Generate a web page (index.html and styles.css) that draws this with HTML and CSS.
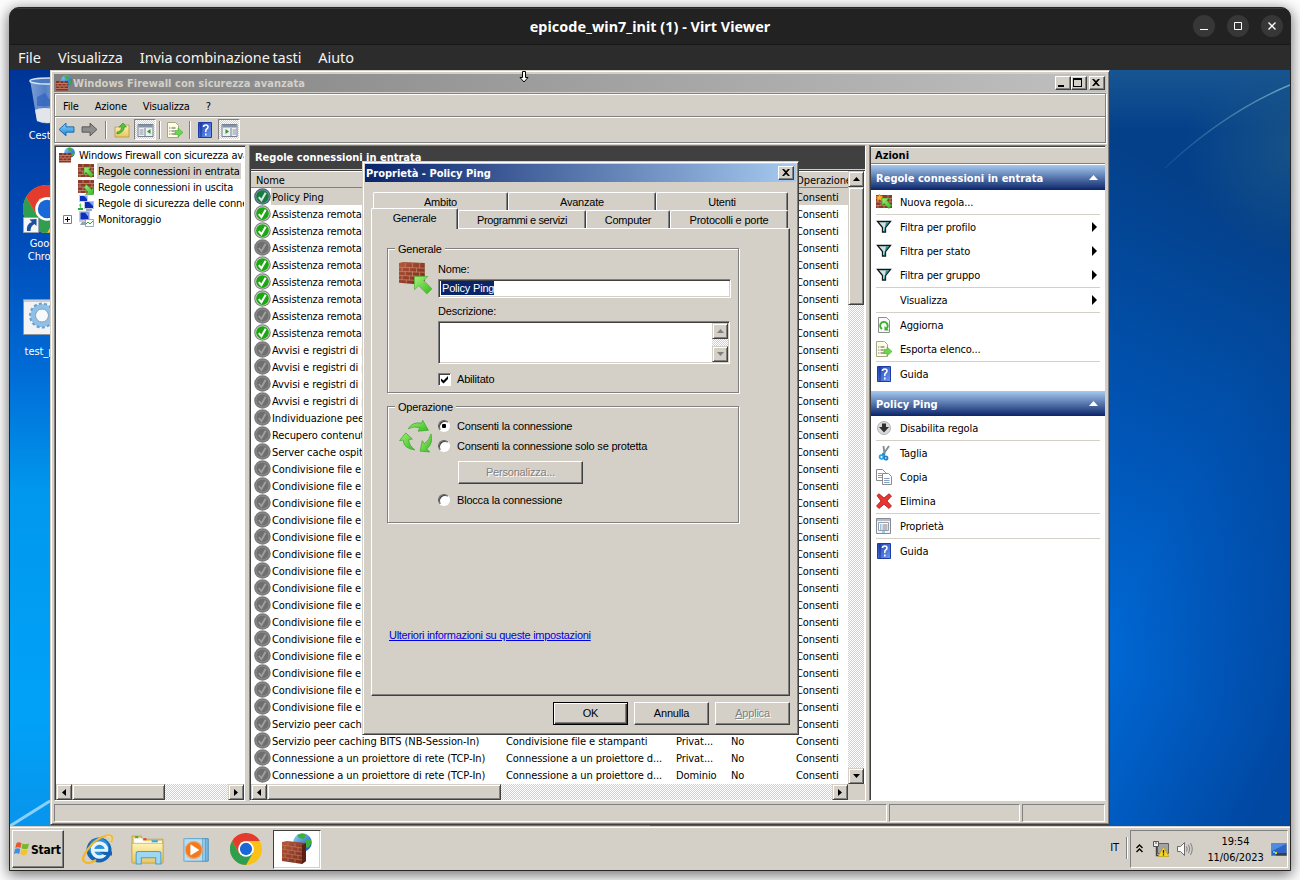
FILE: index.html
```html
<!DOCTYPE html>
<html lang="it">
<head>
<meta charset="utf-8">
<title>epicode_win7_init (1) - Virt Viewer</title>
<link rel="stylesheet" href="styles.css">
</head>
<body>
<svg class="defs" width="0" height="0">
  <defs>
    <linearGradient id="gGlobe" x1="0" y1="0" x2="1" y2="1"><stop offset="0" stop-color="#8fd4ff"/><stop offset="1" stop-color="#0a4fb0"/></linearGradient>
    <linearGradient id="gGreen" x1="0" y1="0" x2="1" y2="1"><stop offset="0" stop-color="#a4f07c"/><stop offset="1" stop-color="#36b81e"/></linearGradient>
    <linearGradient id="gBlue" x1="0" y1="0" x2="0" y2="1"><stop offset="0" stop-color="#8fd6fb"/><stop offset="1" stop-color="#1a86d8"/></linearGradient>
    <linearGradient id="gBook" x1="0" y1="0" x2="1" y2="1"><stop offset="0" stop-color="#1c3fb4"/><stop offset="1" stop-color="#6f9cf2"/></linearGradient>
    <linearGradient id="gBrick" x1="0" y1="0" x2="1" y2="1"><stop offset="0" stop-color="#b8583c"/><stop offset="1" stop-color="#6e2817"/></linearGradient>
    <linearGradient id="gFold" x1="0" y1="0" x2="0" y2="1"><stop offset="0" stop-color="#fff3b4"/><stop offset="1" stop-color="#e6c763"/></linearGradient>
    <linearGradient id="gBin" x1="0" y1="0" x2="1" y2="0"><stop offset="0" stop-color="#8ba9d8"/><stop offset=".4" stop-color="#5b87cc"/><stop offset="1" stop-color="#c9d8ee"/></linearGradient>
    <symbol id="wall" viewBox="0 0 16 16">
      <path d="M0 1h16v13H0z" fill="#8e3a28"/>
      <path d="M0 4.500h16M0 8h16M0 11.500h16M5 1v3.500M12 1v3.500M2 4.500V8M8 4.500V8M14 4.500V8M5 8v3.500M11 8v3.500M2 11.500V14M8 11.500V14" stroke="#c99a88" stroke-width=".7" fill="none"/>
    </symbol>
    <symbol id="globewall" viewBox="0 0 16 16">
      <circle cx="10.500" cy="5.500" r="5.300" fill="url(#gGlobe)"/>
      <path d="M8 1.500q4-2 5.500 1l-1.500 2-2-1zM13 6l2.500-1q0 4-3 5z" fill="#3fae3a"/>
      <path d="M0 6h12v9.500H0z" fill="#8a3222"/>
      <path d="M0 8.500h12M0 11h12M0 13.500h12M4 6v2.500M8 6v2.500M6 8.500V11M10 8.500V11M2 8.500V11M4 11v2.500M8 11v2.500" stroke="#cf917c" stroke-width=".7" fill="none"/>
    </symbol>
    <symbol id="rulein" viewBox="0 0 16 16"><use href="#wall"/><path d="M6 4h7l-2 2.500 4.500 5-2.500 3-5-5L6 12z" fill="url(#gGreen)" stroke="#2d9420" stroke-width=".6"/></symbol>
    <symbol id="ruleout" viewBox="0 0 16 16"><use href="#wall"/><path d="M15.500 15.500h-8l2.500-2.500-4-4.500 2.500-3 5 5 2-2.500z" fill="url(#gGreen)" stroke="#2d9420" stroke-width=".6"/></symbol>
    <symbol id="rulenew" viewBox="0 0 16 16"><use href="#rulein"/><path d="M3.500 0l1 2.300 2.500.3-1.800 1.700.8 2.500-2.500-1.200L1 6.800l.8-2.500L0 2.600l2.500-.3z" fill="#ffb52c" stroke="#ee8a1e" stroke-width=".5"/></symbol>
    <symbol id="pcs" viewBox="0 0 16 16">
      <path d="M1 0h9v7H1z" fill="#c8d2e2"/><path d="M2 1h7v5H2z" fill="#0d2ec0"/><path d="M6 1h3v3z" fill="#7ea2f2"/>
      <path d="M6 6h10v8H6z" fill="#bcc8da"/><path d="M7 7h8v6H7z" fill="#0c2ab4"/><path d="M11 7h4v4z" fill="#7ea2f2"/>
      <path d="M1 10l2-2v6z" fill="#57d64a"/><path d="M0 13h5v2H0z" fill="#2ca83c"/><path d="M8 14h6v2H8z" fill="#9aa6ba"/>
    </symbol>
    <symbol id="mon" viewBox="0 0 16 16">
      <path d="M1 0h11v11H1z" fill="#c3cddb"/><path d="M2.500 1.500h8v7h-8z" fill="#0c31bd"/><path d="M7 1.500h3.500V6z" fill="#86aaf4"/><path d="M4 11h5l2 3H2z" fill="#93a0b5"/>
      <path d="M7.500 8.500h8v7h-8z" fill="#fff" stroke="#7f96ac" stroke-width=".8"/><path d="M8 13l2-2 2 2 3-3" stroke="#33a22a" fill="none"/>
    </symbol>
    <symbol id="back" viewBox="0 0 16 14"><path d="M1 7l6.500-6v3.500H15v5H7.500V13z" fill="url(#gBlue)" stroke="#1668ae" stroke-width=".9"/></symbol>
    <symbol id="fwd" viewBox="0 0 16 14"><path d="M15 7L8.500 1v3.500H1v5h7.500V13z" fill="#8d8d8d" stroke="#555" stroke-width=".9"/></symbol>
    <symbol id="up" viewBox="0 0 16 16"><path d="M1 5h5l1-2h8v12H1z" fill="url(#gFold)" stroke="#b18d32" stroke-width=".7"/><path d="M3 10q4 0 4.500-5H5l4-4 3.500 4h-2q-1 6-7.500 7z" fill="#55c23a" stroke="#2f8c1e" stroke-width=".6"/></symbol>
    <symbol id="panel" viewBox="0 0 16 16"><path d="M.5 2.500h15v12H.5z" fill="#eef0f3" stroke="#77808c"/><path d="M1 3h14v2.500H1z" fill="#8494a8"/><path d="M2 8h4M2 10h4M2 12h4" stroke="#8795ac"/><path d="M7.500 6v8" stroke="#77808c"/><path d="M13 7v5l-3.500-2.500z" fill="#2b9a24"/></symbol>
    <symbol id="panel2" viewBox="0 0 16 16"><path d="M.5 2.500h15v12H.5z" fill="#eef0f3" stroke="#77808c"/><path d="M1 3h14v2.500H1z" fill="#8494a8"/><path d="M11 8h3.500M11 10h3.500M11 12h3.500" stroke="#8795ac"/><path d="M9.500 6v8" stroke="#77808c"/><path d="M4 7v5l3.500-2.500z" fill="#2b9a24"/></symbol>
    <symbol id="export" viewBox="0 0 16 16"><path d="M.5.500h8l3 3v12H.5z" fill="#fffde4" stroke="#aaa584"/><path d="M4.500 6h4M4.500 9h3M4.500 12h4" stroke="#555"/><path d="M2.300 6h1M2.300 9h1M2.300 12h1" stroke="#45526b"/><path d="M8 8.500h3V6l5 4.500-5 4.500v-2.500H8z" fill="#6ed353" stroke="#45ab30" stroke-width=".6"/></symbol>
    <symbol id="help" viewBox="0 0 14 16"><path d="M.5.500h13v15H.5z" fill="url(#gBook)" stroke="#1d3ba5"/><path d="M3 1v14" stroke="#173591"/><path d="M5.500 5q0-2 2.300-2t2.200 2q0 1.300-1.300 2T7.800 10M7.800 11.500v2" stroke="#fff" stroke-width="1.600" fill="none"/></symbol>
    <symbol id="ok" viewBox="0 0 16 16"><circle cx="8" cy="8" r="7.800" fill="#858585"/><circle cx="8" cy="8" r="6.700" fill="#dcdcdc"/><circle cx="8" cy="8" r="6" fill="#1fa614"/><path d="M4.500 8.500L7 11.500l4-7" stroke="#fff" stroke-width="1.900" fill="none"/></symbol>
    <symbol id="oksel" viewBox="0 0 16 16"><circle cx="8" cy="8" r="7.800" fill="#4d607d"/><circle cx="8" cy="8" r="6.700" fill="#8393ac"/><circle cx="8" cy="8" r="5.900" fill="#187d3a"/><path d="M4.500 8.500L7 11.500l4-7" stroke="#d8e4ee" stroke-width="1.900" fill="none"/></symbol>
    <symbol id="off" viewBox="0 0 16 16"><circle cx="8" cy="8" r="7.800" fill="#7c7c7c"/><circle cx="8" cy="8" r="6.400" fill="#8e8e8e"/><circle cx="8" cy="8" r="5.700" fill="#6f6f6f"/><path d="M4.500 8.500L7 11.500l4-7" stroke="#a0a0a0" stroke-width="1.700" fill="none"/></symbol>
    <symbol id="funnel" viewBox="0 0 16 14"><path d="M1.500 1.500h13l-5 6v4.500h-3V7.500z" fill="#cfe3e4" stroke="#101a1c" stroke-width="1.300"/><path d="M10 2.500h3l-3.800 4.500V11H8z" fill="#1b8f96"/></symbol>
    <symbol id="refresh" viewBox="0 0 16 16"><path d="M2.500.500h8l3 3v12h-11z" fill="#fafafa" stroke="#8e8e8e"/><path d="M6 12a3.800 3.800 0 1 1 4.500-.5" stroke="#3fae30" stroke-width="1.900" fill="none"/><path d="M8.500 9v4.500H13z" fill="#3fae30"/></symbol>
    <symbol id="disable" viewBox="0 0 16 16"><circle cx="8" cy="8" r="6.500" fill="#dadada" stroke="#b3b3b3"/><path d="M6 3.500h4V7h3l-5 5.500L3 7h3z" fill="#303030"/></symbol>
    <symbol id="cut" viewBox="0 0 16 16"><path d="M7.500 9L13 1M8.500 9L7.500 1" stroke="#7d8e9c" stroke-width="1.900"/><path d="M6 9l3 1" stroke="#2f85bb" stroke-width="2.400"/><circle cx="5.500" cy="12" r="1.900" fill="none" stroke="#25a2e8" stroke-width="1.800"/><circle cx="9.800" cy="13" r="1.700" fill="none" stroke="#1d83d2" stroke-width="1.800"/></symbol>
    <symbol id="copy" viewBox="0 0 16 16"><path d="M.5.500h6l3 3v8h-9z" fill="#fff" stroke="#8b8b8b"/><path d="M2 4.500h4M2 6.500h4M2 8.500h4" stroke="#86a0c4"/><path d="M6.500 4.500h6l3 3v8h-9z" fill="#fff" stroke="#8b8b8b"/><path d="M8 9.500h5.500M8 11.500h5.500M8 13.500h5.500" stroke="#86a0c4"/></symbol>
    <symbol id="del" viewBox="0 0 16 16"><path d="M1 2.500L3 .8l5 4.200 5-4.200 2.500 2.200-4.500 5 4.500 5-2.500 2.500L8 11.200 3 15.500.5 13 5 8z" fill="#e8352f" stroke="#ab1913" stroke-width=".8" stroke-linejoin="round"/></symbol>
    <symbol id="props" viewBox="0 0 16 16"><path d="M.5.500h14v15H.5z" fill="#f3f4f6" stroke="#868b93"/><path d="M1 1h13v2H1z" fill="#b6bcc6"/><path d="M2.500 4.500h10v8h-10z" fill="#fff" stroke="#98a0ad"/><path d="M4 7h1.500M4 9h1.500M4 11h1.500" stroke="#2b86d4"/><path d="M6.500 7h5M6.500 9h5M6.500 11h5" stroke="#777"/><path d="M6 14h3" stroke="#29b9e8"/></symbol>
    <symbol id="bigrule" viewBox="0 0 32 32">
      <path d="M0 1l4-1 21 1v17l-3 4L0 20z" fill="url(#gBrick)"/>
      <path d="M0 5l25 1M0 9l25 1M0 13l24 1M0 17l22 1M6 1v4M13 1v4M20 1v5M3 5v4M10 5v5M17 6v4M6 9v4M13 9v5M20 10v4M3 13v4M10 13v5M7 17v3" stroke="#cc8b72" stroke-width=".7" fill="none"/>
      <path d="M15 14h13l-4 4 8 8-5 5-8-8-4 4z" fill="url(#gGreen)" stroke="#4cb934" stroke-width=".7"/>
    </symbol>
    <symbol id="cycle" viewBox="0 0 32 32"><g fill="url(#gGreen)" stroke="#35ad22" stroke-width=".7">
      <path d="M9 8.500Q13 1.500 22 3L23 .3l5.500 9.700-10 .8 1.700-3.300Q14 5.500 9 8.500z"/>
      <path d="M31 13.500q2.500 9-4 14.500l2.800 3-9.300-.8 2-10.200 2 3Q29.500 20 31 13.500z"/>
      <path d="M15.500 29Q4.500 28 4 19.500L.5 20l6-7.500 6.500 6-3.500.5q0 6 6 10z"/></g></symbol>
    <symbol id="chrome" viewBox="0 0 48 48">
      <circle cx="24" cy="24" r="24" fill="#fbc116"/>
      <path d="M3.200 12A24 24 0 0 0 24 48L34.400 30 24 24 13.600 30z" fill="#2f9e4f"/>
      <path d="M3.200 12L13.600 30 16 14 24 12h20.800A24 24 0 0 0 3.200 12z" fill="#e33b2e"/>
      <circle cx="24" cy="24" r="11.800" fill="#fff"/><circle cx="24" cy="24" r="9.200" fill="#1a67d8"/>
    </symbol>
    <symbol id="ie" viewBox="0 0 32 32">
      <circle cx="17" cy="17" r="12.500" fill="#1663b5"/><circle cx="17" cy="15" r="10" fill="#2b8fdc"/>
      <circle cx="17.500" cy="17" r="7" fill="none" stroke="#e4f4ff" stroke-width="3.400"/><path d="M17 18.500h13v4l-8-.5z" fill="#1663b5"/><path d="M11 17.300h15" stroke="#e4f4ff" stroke-width="2.800"/>
      <path d="M29 9q3-8-4-6.500Q14 5 6 16T3 29q3 3 11-2" fill="none" stroke="#f0b82a" stroke-width="2.200"/>
      <path d="M28.500 8q2-6-4-4.500" fill="none" stroke="#fbe694" stroke-width="1"/>
    </symbol>
    <symbol id="explorer" viewBox="0 0 32 32">
      <path d="M1 3h9l1 3h20v23H1z" fill="#e9cf7b" stroke="#b99c45" stroke-width=".8"/>
      <path d="M3 5h8l1 3h18v3H3z" fill="#fff"/><path d="M4 3h3v2H4z" fill="#3cb33a"/><path d="M12 5h3v2h-3z" fill="#dd4a31"/><path d="M20 7h6v2h-6z" fill="#32a6e2"/>
      <path d="M1 10h30v19H1z" fill="url(#gFold)" stroke="#c5a850" stroke-width=".7"/>
      <path d="M5 30V20q0-2 2-2h20q2 0 2 2v10h-5v-6H10v6z" fill="#9ed7f1" stroke="#4c9fce" stroke-width="1"/>
    </symbol>
    <symbol id="wmp" viewBox="0 0 32 32">
      <path d="M9 5h19v24H9z" fill="#79b8df" stroke="#4a8dba"/><path d="M5 5h20v24H5z" fill="#9accea" stroke="#5b9cc5"/><path d="M2 5h20v24H2z" fill="#b8def2" stroke="#69a9cf"/>
      <circle cx="12.500" cy="17" r="9.500" fill="#f07a1d"/><circle cx="12.500" cy="17" r="9" fill="none" stroke="#f8b27c"/><path d="M9 11v12l9.500-6z" fill="#fff"/>
    </symbol>
    <symbol id="bigwall" viewBox="0 0 32 32">
      <circle cx="21.500" cy="9.500" r="9.300" fill="url(#gGlobe)"/><path d="M16 2q6-3 9 0l-2 4-5-1zM25 7l5-1q1 6-4 9l-2-3z" fill="#3fae3a"/>
      <path d="M1 9l5-1 19 2v18l-4 3-20-3z" fill="url(#gBrick)"/><path d="M21 12l4-2v18l-4 3z" fill="#5c2012"/>
      <path d="M1 12l20 3M1 16l20 3M1 20l20 3M1 24l20 3M7 9v4M14 10v4M4 13v3M11 14v3M17 14v4M7 17v4M14 18v4M4 21v3M11 22v3M17 22v4M7 25v3M14 26v4" stroke="#c07a60" stroke-width=".7" fill="none"/>
    </symbol>
    <symbol id="flag" viewBox="0 0 16 14">
      <path d="M2.500 1Q5-.5 7.500 1.200L6.500 6Q4 4.500 1.300 6z" fill="#e8572a"/><path d="M8.500 1.500Q11 3 15 1.500L13.800 6.500Q10.500 8 7.500 6.300z" fill="#76b82c"/>
      <path d="M1 7q2.500-1.500 5.300 0L5.200 12Q2.800 10.500 0 12z" fill="#3f8fdd"/><path d="M7.300 7.500q3 1.500 6.300 0l-1.200 5q-3 1.500-6.200-.5z" fill="#f6c12b"/>
    </symbol>
    <symbol id="warnnet" viewBox="0 0 16 16"><path d="M4.500 2.500h11v10h-11z" fill="#a3a3a3" stroke="#606060"/><path d="M.5.500h5v5h-5z" fill="#eee" stroke="#555"/><path d="M3 0v3" stroke="#555"/><path d="M3.500 5.500v9h2.500" stroke="#444" fill="none" stroke-width="1.400"/><path d="M10.500 6l5.500 9.500H5z" fill="#f9d51c" stroke="#b5960d" stroke-width=".6"/><path d="M10.500 9v3.500M10.500 13.300v1.200" stroke="#222" stroke-width="1.300"/></symbol>
    <symbol id="speaker" viewBox="0 0 16 16"><path d="M.5 5.500h3l4-4v13l-4-4h-3z" fill="#fafafa" stroke="#6b6b6b"/><path d="M9.500 5.500q1.500 2.500 0 5M11.500 3.800q2.500 4.200 0 8.400M13.500 2q3.500 6 0 12" stroke="#808080" fill="none"/></symbol>
    <symbol id="showdesk" viewBox="0 0 16 13"><path d="M.5.500h15v12H.5z" fill="#2c64c8" stroke="#6a85b4"/><path d="M1 1h14L1 8z" fill="#4f8be0"/><path d="M5 10h10.500v2.500H5z" fill="#3b3d42"/><path d="M2 8h2v2H2z" fill="#42c3ec"/><path d="M4 9h2v2H4z" fill="#c9dd33"/></symbol>
    <symbol id="x" viewBox="0 0 8 7"><path d="M0 0h2l2 2 2-2h2L5 3.500 8 7H6L4 5 2 7H0l3-3.500z"/></symbol>
    <symbol id="triL" viewBox="0 0 4 7"><path d="M4 0v7L0 3.500z"/></symbol>
    <symbol id="triR" viewBox="0 0 4 7"><path d="M0 0v7l4-3.500z"/></symbol>
    <symbol id="triU" viewBox="0 0 7 4"><path d="M0 4h7L3.500 0z"/></symbol>
    <symbol id="triD" viewBox="0 0 7 4"><path d="M0 0h7L3.500 4z"/></symbol>
  </defs>
</svg>

<div class="viewer">
  <header class="v-title">
    <span class="v-name">epicode_win7_init (1) - Virt Viewer</span>
    <div class="v-ctl">
      <i><svg width="22" height="22"><path d="M7 14.500h8" stroke="#fff"/></svg></i>
      <i><svg width="22" height="22"><path d="M7.500 7.500h7v7h-7z" stroke="#fff" fill="none"/></svg></i>
      <i><svg width="22" height="22"><path d="M7.500 7.500l7 7M14.500 7.500l-7 7" stroke="#fff" stroke-width="1.300"/></svg></i>
    </div>
  </header>
  <nav class="v-menu"><span>File</span><span>Visualizza</span><span>Invia combinazione tasti</span><span>Aiuto</span></nav>

  <main class="desktop">
    <svg class="wallpaper" width="1280" height="756" viewBox="0 0 1280 756">
      <defs>
        <linearGradient id="wl" x1="0" y1="0" x2="0" y2="1"><stop offset="0" stop-color="#003597"/><stop offset=".25" stop-color="#0050bd"/><stop offset=".4" stop-color="#006cd6"/><stop offset=".56" stop-color="#0098ee"/><stop offset=".85" stop-color="#00a2f8"/><stop offset="1" stop-color="#0894ec"/></linearGradient>
        <linearGradient id="wr" gradientUnits="userSpaceOnUse" x1="1250" y1="150" x2="1040" y2="560"><stop offset="0" stop-color="#04408a"/><stop offset=".5" stop-color="#0053b2"/><stop offset="1" stop-color="#006ad8"/></linearGradient>
        <linearGradient id="wt" x1="0" y1="0" x2="0" y2="1"><stop offset="0" stop-color="#2a6a9a" stop-opacity=".5"/><stop offset="1" stop-color="#2a6a9a" stop-opacity="0"/></linearGradient>
        <linearGradient id="we" gradientUnits="userSpaceOnUse" x1="1120" y1="520" x2="1310" y2="620"><stop offset="0" stop-color="#003c90" stop-opacity="0"/><stop offset="1" stop-color="#003c90" stop-opacity=".75"/></linearGradient>
        <radialGradient id="wg" gradientUnits="userSpaceOnUse" cx="1285" cy="75" r="110"><stop offset="0" stop-color="#1b5686" stop-opacity=".8"/><stop offset="1" stop-color="#1b5686" stop-opacity="0"/></radialGradient>
        <linearGradient id="ray" gradientUnits="userSpaceOnUse" x1="1140" y1="0" x2="1280" y2="0"><stop offset="0" stop-color="#7fb8d0" stop-opacity="0"/><stop offset="1" stop-color="#7fb8d0" stop-opacity=".8"/></linearGradient>
      </defs>
      <rect width="640" height="756" fill="url(#wl)"/>
      <rect x="640" width="640" height="756" fill="url(#wr)"/>
      <rect x="1000" y="0" width="280" height="756" fill="url(#we)"/>
      <rect x="1000" y="0" width="280" height="60" fill="url(#wt)"/>
      <rect x="1150" y="0" width="130" height="200" fill="url(#wg)"/>
      <path d="M1155 98Q1215 42 1280 15" stroke="url(#ray)" stroke-width="1.400" fill="none"/>
      <path d="M0 756L40 731" stroke="#9fdcff" stroke-width="3" opacity=".85"/>
    </svg>

    <div class="shortcuts">
      <div class="shortcut bin">
        <svg width="48" height="48" viewBox="0 0 48 48"><path d="M5 3l7 41q10 5 20 0L43 3z" fill="url(#gBin)" opacity=".9"/><ellipse cx="24" cy="4" rx="19" ry="3" fill="#4c7ac0" stroke="#d3e1f2" stroke-width="1.500"/><path d="M10 33q7-4 25 0l-2 11q-11 4-21 0z" fill="#e2e6ea"/><path d="M12 20l8-4 4 6 8-2v9H12z" fill="#2d62bd" opacity=".7"/></svg>
        <span>Cestino</span>
      </div>
      <div class="shortcut goo">
        <svg width="48" height="48" viewBox="0 0 48 48"><use href="#chrome"/><path d="M.5 32.500h15v15H.5z" fill="#f4f6f8" stroke="#9aa6b3"/><path d="M4 46q-1-7 5-9l-2.500-2.500 7-.5V41l-2-2q-4 2-4 7z" fill="#1c4f9c"/></svg>
        <span>Google<br>Chrome</span>
      </div>
      <div class="shortcut tst">
        <svg width="48" height="36" viewBox="0 0 48 36"><path d="M.5.500h47v35H.5z" fill="#f3f3f3" stroke="#8d949c"/><path d="M1 1h46v2H1z" fill="#c6ccd3"/><circle cx="19" cy="16.500" r="9" fill="none" stroke="#8fc0e8" stroke-width="5"/><circle cx="19" cy="16.500" r="12" fill="none" stroke="#6b9fcd" stroke-width="2" stroke-dasharray="3 2.300"/><circle cx="19" cy="16.500" r="6.500" fill="#f6fafd" stroke="#7e9fb9"/></svg>
        <span>test_ping</span>
      </div>
    </div>

    <section class="mmc">
      <div class="m-title"><svg width="16" height="16"><use href="#globewall"/></svg><b>Windows Firewall con sicurezza avanzata</b>
        <div class="m-ctl"><i><svg width="12" height="10"><path d="M2 7h6v2H2z"/></svg></i><i><svg width="12" height="10"><path d="M1 0h9v9H1zM2 2v6h7V2z" fill-rule="evenodd"/></svg></i><i class="gapl"><svg width="8" height="7"><use href="#x"/></svg></i></div>
      </div>
      <div class="bars">
        <div class="m-menu"><span>File</span><span>Azione</span><span>Visualizza</span><span>?</span></div>
        <div class="m-tools">
          <svg width="17" height="15"><use href="#back"/></svg>
          <svg class="t2" width="17" height="15"><use href="#fwd"/></svg>
          <hr>
          <svg class="t3" width="16" height="16"><use href="#up"/></svg>
          <i class="on"><svg width="17" height="16"><use href="#panel"/></svg></i>
          <hr class="h2">
          <svg class="t4" width="16" height="16"><use href="#export"/></svg>
          <hr class="h3">
          <svg class="t5" width="14" height="16"><use href="#help"/></svg>
          <i class="on o2"><svg width="17" height="16"><use href="#panel2"/></svg></i>
        </div>
      </div>

      <div class="panes">
        <aside class="tree">
          <div class="tree-body">
            <div class="node root"><svg width="16" height="16"><use href="#globewall"/></svg><span>Windows Firewall con sicurezza avanzata</span></div>
            <div class="node"><svg width="16" height="16"><use href="#rulein"/></svg><span class="sel">Regole connessioni in entrata</span></div>
            <div class="node"><svg width="16" height="16"><use href="#ruleout"/></svg><span>Regole connessioni in uscita</span></div>
            <div class="node"><svg width="16" height="16"><use href="#pcs"/></svg><span>Regole di sicurezza delle connessioni</span></div>
            <div class="node exp"><svg class="plus" width="9" height="9"><path d="M.5.500h8v8h-8z" fill="#fff" stroke="#808080"/><path d="M2 4.500h5M4.500 2v5" stroke="#000"/></svg><svg width="16" height="16"><use href="#mon"/></svg><span>Monitoraggio</span></div>
          </div>
          <div class="hs"><i class="sb"><svg width="4" height="7"><use href="#triL"/></svg></i><i class="th th1"></i><em></em><i class="sb"><svg width="4" height="7"><use href="#triR"/></svg></i></div>
        </aside>

        <section class="center">
          <h2>Regole connessioni in entrata</h2>
          <div class="listbox">
            <div class="list">
              <div class="lh"><span class="c1">Nome</span><span class="c5">Operazione</span></div>
              <div id="rows"></div>
            </div>
            <div class="vs"><i class="sb"><svg width="7" height="4"><use href="#triU"/></svg></i><i class="th"></i><em></em><i class="sb"><svg width="7" height="4"><use href="#triD"/></svg></i></div>
          </div>
          <div class="hs hs2"><i class="sb"><svg width="4" height="7"><use href="#triL"/></svg></i><i class="th th2"></i><em></em><i class="sb"><svg width="4" height="7"><use href="#triR"/></svg></i><b></b></div>
        </section>

        <aside class="actions">
          <div class="a-head">Azioni</div>
          <div class="a-sec"><span>Regole connessioni in entrata</span><svg width="9" height="5"><path d="M0 5h9L4.500 0z" fill="#fff"/></svg></div>
          <div class="a"><svg width="16" height="16"><use href="#rulenew"/></svg><span>Nuova regola...</span></div><hr>
          <div class="a sub"><svg width="16" height="14"><use href="#funnel"/></svg><span>Filtra per profilo</span><svg width="5" height="10"><path d="M0 0l5 5-5 5z"/></svg></div>
          <div class="a sub"><svg width="16" height="14"><use href="#funnel"/></svg><span>Filtra per stato</span><svg width="5" height="10"><path d="M0 0l5 5-5 5z"/></svg></div>
          <div class="a sub"><svg width="16" height="14"><use href="#funnel"/></svg><span>Filtra per gruppo</span><svg width="5" height="10"><path d="M0 0l5 5-5 5z"/></svg></div><hr>
          <div class="a sub"><svg width="16" height="14"></svg><span>Visualizza</span><svg width="5" height="10"><path d="M0 0l5 5-5 5z"/></svg></div><hr>
          <div class="a"><svg width="16" height="16"><use href="#refresh"/></svg><span>Aggiorna</span></div>
          <div class="a"><svg width="16" height="16"><use href="#export"/></svg><span>Esporta elenco...</span></div><hr>
          <div class="a"><svg width="16" height="16"><use href="#help"/></svg><span>Guida</span></div>
          <div class="a-sec second"><span>Policy Ping</span><svg width="9" height="5"><path d="M0 5h9L4.500 0z" fill="#fff"/></svg></div>
          <div class="a"><svg width="16" height="16"><use href="#disable"/></svg><span>Disabilita regola</span></div><hr>
          <div class="a"><svg width="16" height="16"><use href="#cut"/></svg><span>Taglia</span></div>
          <div class="a"><svg width="16" height="16"><use href="#copy"/></svg><span>Copia</span></div>
          <div class="a"><svg width="16" height="16"><use href="#del"/></svg><span>Elimina</span></div><hr>
          <div class="a"><svg width="16" height="16"><use href="#props"/></svg><span>Proprietà</span></div><hr>
          <div class="a"><svg width="16" height="16"><use href="#help"/></svg><span>Guida</span></div>
        </aside>
      </div>
      <div class="status"><i></i><i></i><i></i></div>
    </section>

    <section class="dialog">
      <div class="d-title"><b>Proprietà - Policy Ping</b><i><svg width="8" height="7"><use href="#x"/></svg></i></div>
      <div class="tabs back"><span class="k1">Ambito</span><span class="k2">Avanzate</span><span class="k3">Utenti</span></div>
      <div class="tabs front"><span class="cur">Generale</span><span class="k4">Programmi e servizi</span><span class="k5">Computer</span><span class="k6">Protocolli e porte</span></div>
      <div class="page">
        <div class="group g1">
          <span class="legend">Generale</span>
          <svg class="gi" width="33" height="33"><use href="#bigrule"/></svg>
          <div class="fields">
            <label>Nome:</label>
            <div class="inp"><span>Policy Ping</span></div>
            <label class="l2">Descrizione:</label>
            <div class="area"><div class="vs dis"><i class="sb"><svg width="7" height="4"><use href="#triU"/></svg></i><em></em><i class="sb"><svg width="7" height="4"><use href="#triD"/></svg></i></div></div>
            <div class="opt ck"><i class="box"><svg width="9" height="9"><path d="M1 3.500v2.500l2.500 2.500L8 4V1L3.500 5.500z"/></svg></i><span>Abilitato</span></div>
          </div>
        </div>
        <div class="group g2">
          <span class="legend">Operazione</span>
          <svg class="gi" width="33" height="33"><use href="#cycle"/></svg>
          <div class="fields">
            <div class="opt"><i class="rad on"></i><span>Consenti la connessione</span></div>
            <div class="opt r2"><i class="rad"></i><span>Consenti la connessione solo se protetta</span></div>
            <div class="btn pers dim">Personalizza...</div>
            <div class="opt r3"><i class="rad"></i><span>Blocca la connessione</span></div>
          </div>
        </div>
        <a class="link">Ulteriori informazioni su queste impostazioni</a>
      </div>
      <div class="d-btns"><div class="btn def">OK</div><div class="btn">Annulla</div><div class="btn dim"><u>A</u>pplica</div></div>
    </section>

    <svg class="cursor" width="10" height="14" viewBox="0 0 10 14"><path d="M3.500 1.500h3v6h2.500L5 12 1 7.500h2.500z" fill="#fff" stroke="#000"/></svg>
  </main>

  <footer class="taskbar">
    <div class="start"><svg width="16" height="14"><use href="#flag"/></svg><b>Start</b></div>
    <div class="task"><svg width="32" height="32"><use href="#ie"/></svg></div>
    <div class="task"><svg width="33" height="33"><use href="#explorer"/></svg></div>
    <div class="task"><svg width="30" height="30"><use href="#wmp"/></svg></div>
    <div class="task"><svg width="32" height="32"><use href="#chrome"/></svg></div>
    <div class="task active"><svg width="32" height="32"><use href="#bigwall"/></svg></div>
    <span class="lang">IT</span><i class="sep"></i>
    <div class="tray">
      <svg class="chev" width="7" height="9"><path d="M.5 4L3.500 1l3 3M.5 8l3-3 3 3" stroke="#000" stroke-width="1.400" fill="none"/></svg>
      <svg width="16" height="16"><use href="#warnnet"/></svg>
      <svg width="16" height="16"><use href="#speaker"/></svg>
      <div class="clock">19:54<br>11/06/2023</div>
      <svg width="16" height="13"><use href="#showdesk"/></svg>
    </div>
  </footer>
</div>
<script src="rows.js"></script>
</body>
</html>
```
FILE: styles.css
```css
* { box-sizing: border-box; }
html, body { margin: 0; height: 100%; overflow: hidden; }
body { background: #fdfdfd; font: 11px/14px "DejaVu Sans Condensed", "DejaVu Sans", sans-serif; letter-spacing: -.08px; color: #000; padding: 7px 9px; white-space: nowrap; }
i, em { font-style: normal; display: block; }
svg { display: block; flex: none; }
hr { margin: 0; border: 0; }
b, h2, .a-head, .a-sec { letter-spacing: 0; }
.defs { position: absolute; }

.viewer { width: 1282px; height: 864px; border: 1px solid #262626; border-radius: 10px 10px 0 0; background: #222; box-shadow: 0 3px 14px 1px rgba(0,0,0,.55); overflow: hidden; }
.v-title { height: 37px; display: flex; align-items: center; background: #222; border-top: 1px solid #3a3a3a; border-bottom: 1px solid #181818; font: bold 14.400px/20px "Noto Sans", sans-serif; letter-spacing: .03px; color: #fff; }
.v-name { flex: 1; text-align: center; padding-left: 97px; }
.v-ctl { display: flex; gap: 12px; padding-right: 7px; margin-top: -2px; }
.v-ctl i { width: 22px; height: 22px; border-radius: 50%; background: #373737; }
.v-menu { height: 25px; background: #2c2c2c; display: flex; gap: 17px; padding-left: 8px; font: 14.500px/24px "Noto Sans", sans-serif; letter-spacing: -.08px; word-spacing: -1px; color: #f2f2f2; }
.desktop { position: relative; height: 756px; overflow: hidden; background: #0058c0; }
.wallpaper { position: absolute; left: 0; top: 0; }

.shortcuts { position: absolute; left: 0; top: 7px; width: 74px; color: #fff; line-height: 13px; text-align: center; }
.shortcut { display: flex; flex-direction: column; align-items: center; }
.bin { height: 108px; }
.bin span { margin-top: 4px; }
.bin svg { margin-left: 3px; }
.goo { height: 114px; }
.goo span { margin-top: 4px; }
.tst span { margin-top: 10px; }

.mmc { position: absolute; left: 40px; top: 0; width: 1060px; height: 755px; background: #d4d0c8; border: 1px solid; border-color: #d4d0c8 #404040 #404040 #d4d0c8; box-shadow: inset 1px 1px #fff, inset -1px -1px #808080; padding: 3px; }
.m-title { height: 18px; display: flex; align-items: center; background: linear-gradient(90deg, #808080, #c0c0c0); color: #d4d0c8; padding: 0 1px 0 2px; }
.m-title svg:first-child { margin-right: 1px; }
.m-title b { flex: 1; padding-top: 2px; letter-spacing: .03px; }
.m-ctl { display: flex; }
.m-ctl i, .d-title i { width: 16px; height: 14px; background: #d4d0c8; border: 1px solid; border-color: #fff #404040 #404040 #fff; box-shadow: inset -1px -1px #808080; display: flex; align-items: center; justify-content: center; padding: 0 1px 1px 0; }
.m-ctl .gapl { margin-left: 2px; }
.bars { height: 50px; margin-top: 1px; border: 1px solid #808080; box-shadow: inset 1px 1px #fff, 1px 1px #fff; }
.m-menu { height: 23px; display: flex; padding: 5px 0 0 8px; gap: 16px; border-bottom: 1px solid #808080; letter-spacing: -.18px; line-height: 15px; }
.m-tools { height: 24px; border-top: 1px solid #fff; display: flex; align-items: center; padding-left: 3px; }
.m-tools hr { width: 2px; height: 18px; background: #808080; border-right: 1px solid #fff; margin: 0 7px; }
.m-tools .t2 { margin-left: 6px; }
.m-tools .on { width: 22px; height: 21px; margin-left: 4px; border: 1px solid; border-color: #808080 #fff #fff #808080; background: repeating-conic-gradient(#fff 0 25%, #d4d0c8 0 50%) 0 0/2px 2px; padding: 2px 0 0 2px; }
.m-tools .h2 { margin: 0 6px 0 3px; }
.m-tools .h3 { margin: 0 7px 0 6px; }
.m-tools .o2 { margin-left: 6px; }

.panes { display: flex; gap: 3px; height: 656px; margin-top: 2px; }
.tree, .center, .actions { border: 1px solid; border-color: #808080 #fff #fff #808080; box-shadow: inset 1px 1px #404040; padding: 1px 0 0 1px; display: flex; flex-direction: column; overflow: hidden; }
.tree { width: 192px; background: #fff; border-right-color: #d4d0c8; padding-right: 1px; }
.tree-body { flex: 1; overflow: hidden; }
.node { height: 16px; display: flex; align-items: center; padding-left: 22px; }
.node svg { margin-right: 3px; }
.node span { padding: 0 1px; height: 16px; line-height: 18px; letter-spacing: -.17px; }
.node.root { padding-left: 3px; }
.node.exp { padding-left: 7px; }
.node .plus { margin-right: 6px; }
.sel { background: #d4d0c8; }
.hs { height: 16px; display: flex; }
.sb { width: 16px; height: 16px; background: #d4d0c8; border: 1px solid; border-color: #d4d0c8 #404040 #404040 #d4d0c8; box-shadow: inset 1px 1px #fff, inset -1px -1px #808080; display: flex; align-items: center; justify-content: center; flex: none; }
.th { background: #d4d0c8; border: 1px solid; border-color: #d4d0c8 #404040 #404040 #d4d0c8; box-shadow: inset 1px 1px #fff, inset -1px -1px #808080; }
.hs em, .vs em { flex: 1; background: repeating-conic-gradient(#fff 0 25%, #d4d0c8 0 50%) 0 0/2px 2px; }
.th1 { width: 93px; }
.th2 { width: 234px; }
.hs2 b { width: 17px; background: #d4d0c8; }

.center { width: 617px; background: #fff; }
.center h2 { margin: 0; height: 23px; background: #404040; color: #fff; font-size: 11px; line-height: 21px; padding-left: 4px; border-bottom: 1px solid #d4d0c8; }
.listbox { height: 614px; border-top: 1px solid #404040; display: flex; flex: 1; }
.list { width: 597px; overflow: hidden; }
.lh { height: 17px; background: #d4d0c8; border-top: 1px solid #fff; border-bottom: 1px solid #808080; display: flex; line-height: 17px; }
.lh .c1 { padding-left: 5px; width: 545px; flex: none; }
.row { height: 17px; display: grid; grid-template: 17px / 3px 17px 234px 170px 55px 65px 60px; line-height: 19px; }
.row > span { padding-left: 1px; overflow: hidden; }
.row.s > span { background: #d4d0c8; }
.vs { width: 16px; display: flex; flex-direction: column; }
.listbox .vs .th { height: 118px; }

.actions { width: 237px; background: #fff; border-right-color: #d4d0c8; }
.a-head { height: 17px; background: #d4d0c8; border-bottom: 1px solid #808080; border-top: 1px solid #fff; font-weight: bold; padding-left: 4px; line-height: 16px; }
.a-sec { height: 25px; margin-top: 1px; background: linear-gradient(#a6caf0, #0a246a); color: #fff; font-weight: bold; display: flex; justify-content: space-between; align-items: center; padding: 0 7px 0 5px; }
.a-sec span, .a span { padding-top: 2px; letter-spacing: -.13px; }
.a-sec span { letter-spacing: .03px; }
.a-sec.second { margin-top: 5px; }
.a { height: 24px; display: flex; align-items: center; padding: 0 8px 0 5px; }
.a svg:first-child { margin-right: 8px; }
.sub svg:last-child { margin-left: auto; }
.actions hr { height: 1px; background: #d4d0c8; margin: 0 5px; flex: none; }
.status { display: flex; gap: 2px; height: 18px; margin-top: 3px; }
.status i { border: 1px solid; border-color: #808080 #fff #fff #808080; width: 131px; }
.status i:first-child { width: 833px; }
.status i:last-child { width: 83px; }

.dialog { position: absolute; left: 352px; top: 91px; width: 437px; height: 574px; background: #d4d0c8; border: 1px solid; border-color: #d4d0c8 #404040 #404040 #d4d0c8; box-shadow: inset 1px 1px #fff, inset -1px -1px #808080; padding: 2px; font: 11px/14px "Liberation Sans", Arial, sans-serif; letter-spacing: -.2px; }
.d-title { height: 18px; background: linear-gradient(90deg, #0a246a, #a6caf0); color: #fff; display: flex; justify-content: space-between; align-items: center; padding: 0 2px 0 1px; font-family: "DejaVu Sans Condensed", sans-serif; }
.d-title b { padding-top: 2px; }
.tabs { display: flex; margin-left: 8px; }
.tabs span { height: 18px; text-align: center; line-height: 18px; border-top: 1px solid #fff; border-left: 1px solid #fff; border-right: 1px solid #404040; box-shadow: inset -1px 0 #808080; border-radius: 2px 2px 0 0; background: #d4d0c8; }
.back { margin-top: 10px; }
.k1 { width: 135px; } .k2 { width: 148px; } .k3 { width: 132px; }
.front { margin-left: 6px; align-items: flex-end; position: relative; margin-top: -2px; }
.tabs .cur { width: 87px; height: 21px; margin-bottom: -1px; line-height: 18px; }
.tabs .k4 { width: 128px; letter-spacing: -.38px; } .k5 { width: 84px; } .k6 { width: 118px; }
.page { margin-left: 6px; width: 419px; height: 468px; border: 1px solid; border-color: #fff #404040 #404040 #fff; box-shadow: inset -1px -1px #808080; padding: 19px 0 0 15px; }
.group { width: 352px; border: 1px solid #808080; box-shadow: inset 1px 1px #fff, 1px 1px #fff; display: flex; position: relative; }
.legend { position: absolute; left: 7px; top: -7px; background: #d4d0c8; padding: 0 3px; }
.g1 { height: 145px; }
.g2 { height: 117px; margin-top: 13px; }
.gi { margin: 13px 7px 0 11px; }
.fields { padding-top: 13px; margin-left: -1px; display: flex; flex-direction: column; }
.inp { margin-top: 3px; width: 293px; height: 19px; background: #fff; border: 1px solid; border-color: #808080 #fff #fff #808080; box-shadow: inset 1px 1px #404040, inset -1px -1px #d4d0c8; padding: 1px 2px; }
.inp span { display: inline-block; background: #0a246a; color: #fff; padding: 0 0 0 1px; }
.l2 { margin-top: 6px; }
.area { margin-top: 3px; width: 292px; height: 43px; background: #fff; border: 1px solid; border-color: #808080 #fff #fff #808080; box-shadow: inset 1px 1px #404040, inset -1px -1px #d4d0c8; padding: 1px; display: flex; justify-content: flex-end; }
.dis svg { fill: #808080; }
.opt { height: 14px; display: flex; align-items: center; gap: 6px; }
.ck { margin-top: 8px; }
.box { width: 13px; height: 13px; background: #fff; border: 1px solid; border-color: #808080 #fff #fff #808080; box-shadow: inset 1px 1px #404040; padding: 1px; }
.rad { width: 12px; height: 12px; margin-right: 1px; border-radius: 50%; background: #fff; border: 1px solid; border-color: #606060 #fff #fff #606060; box-shadow: inset 1px 1px #404040; }
.rad.on { background: radial-gradient(circle at 5px 5px, #000 0 2px, #fff 2.500px); }
.g2 .fields { padding-top: 12px; }
.r2 { margin-top: 6px; }
.r3 { margin-top: 9px; }
.btn { width: 75px; height: 23px; border: 1px solid; border-color: #fff #404040 #404040 #fff; box-shadow: inset -1px -1px #808080; text-align: center; line-height: 21px; }
.btn.def { border-color: #000; box-shadow: inset 1px 1px #fff, inset -1px -1px #404040, inset -2px -2px #808080; }
.dim { color: #808080; text-shadow: 1px 1px #fff; }
.pers { width: 125px; margin: 8px 0 0 20px; }
.link { color: #0000e0; text-decoration: underline; display: inline-block; margin: 105px 0 0 2px; letter-spacing: -.3px; }
.d-btns { display: flex; gap: 6px; justify-content: flex-end; margin-top: 6px; padding-right: 6px; }
.cursor { position: absolute; left: 509px; top: 0; }

.taskbar { height: 44px; background: #d4d0c8; box-shadow: inset 0 1px #d4d0c8, inset 0 2px #fff; display: flex; align-items: center; padding: 2px 2px 0; }
.start { width: 52px; height: 38px; border: 1px solid; border-color: #fff #404040 #404040 #fff; box-shadow: inset -1px -1px #808080; display: flex; align-items: center; gap: 1px; padding-left: 1px; font-size: 12px; margin-right: 9px; }
.start b { letter-spacing: -.2px; padding-top: 1px; }
.task { width: 49.500px; height: 39px; display: flex; align-items: center; justify-content: center; }
.active { width: 48px; margin-left: 2px; background: #fff; border: 1px solid; border-color: #404040 #fff #fff #404040; box-shadow: inset -1px -1px #d4d0c8; }
.lang { margin-left: auto; margin-right: 7px; margin-top: -3px; }
.sep { width: 2px; height: 22px; background: #808080; border-right: 1px solid #fff; margin-right: 2px; margin-top: -2px; }
.tray { width: 158px; height: 38px; border: 1px solid; border-color: #808080 #fff #fff #808080; display: flex; align-items: center; padding-left: 5px; }
.chev { margin-right: 10px; margin-top: -2px; }
.tray svg + svg + svg { margin-left: 8px; }
.clock { width: 72px; margin: 2px 6px 0 13px; text-align: center; line-height: 16px; }
```
FILE: rows.js
```js
const rows = [];
const add = (n, name, icon, rest = []) => { for (let i = 0; i < n; i++) rows.push({ name, icon, rest }); };
add(1, 'Policy Ping', 'oksel');
add(2, 'Assistenza remota', 'ok');
add(1, 'Assistenza remota', 'off');
add(3, 'Assistenza remota', 'ok');
add(1, 'Assistenza remota', 'off');
add(1, 'Assistenza remota', 'ok');
add(4, 'Avvisi e registri di prestazioni', 'off');
add(1, 'Individuazione peer', 'off');
add(1, 'Recupero contenuto', 'off');
add(1, 'Server cache ospitata', 'off');
add(15, 'Condivisione file e stampanti', 'off');
add(1, 'Servizio peer caching', 'off');
add(1, 'Servizio peer caching BITS (NB-Session-In)', 'off', ['Condivisione file e stampanti', 'Privat...', 'No']);
add(1, 'Connessione a un proiettore di rete (TCP-In)', 'off', ['Connessione a un proiettore d...', 'Privat...', 'No']);
add(1, 'Connessione a un proiettore di rete (TCP-In)', 'off', ['Connessione a un proiettore d...', 'Dominio', 'No']);

document.getElementById('rows').innerHTML = rows.map((r, i) => `
  <div class="row${i === 0 ? ' s' : ''}"><i></i>
    <svg width="17" height="17"><use href="#${r.icon}"/></svg>
    <span>${r.name}</span><span>${r.rest[0] || ''}</span>
    <span>${r.rest[1] || ''}</span><span>${r.rest[2] || ''}</span><span>Consenti</span>
  </div>`).join('');
```
